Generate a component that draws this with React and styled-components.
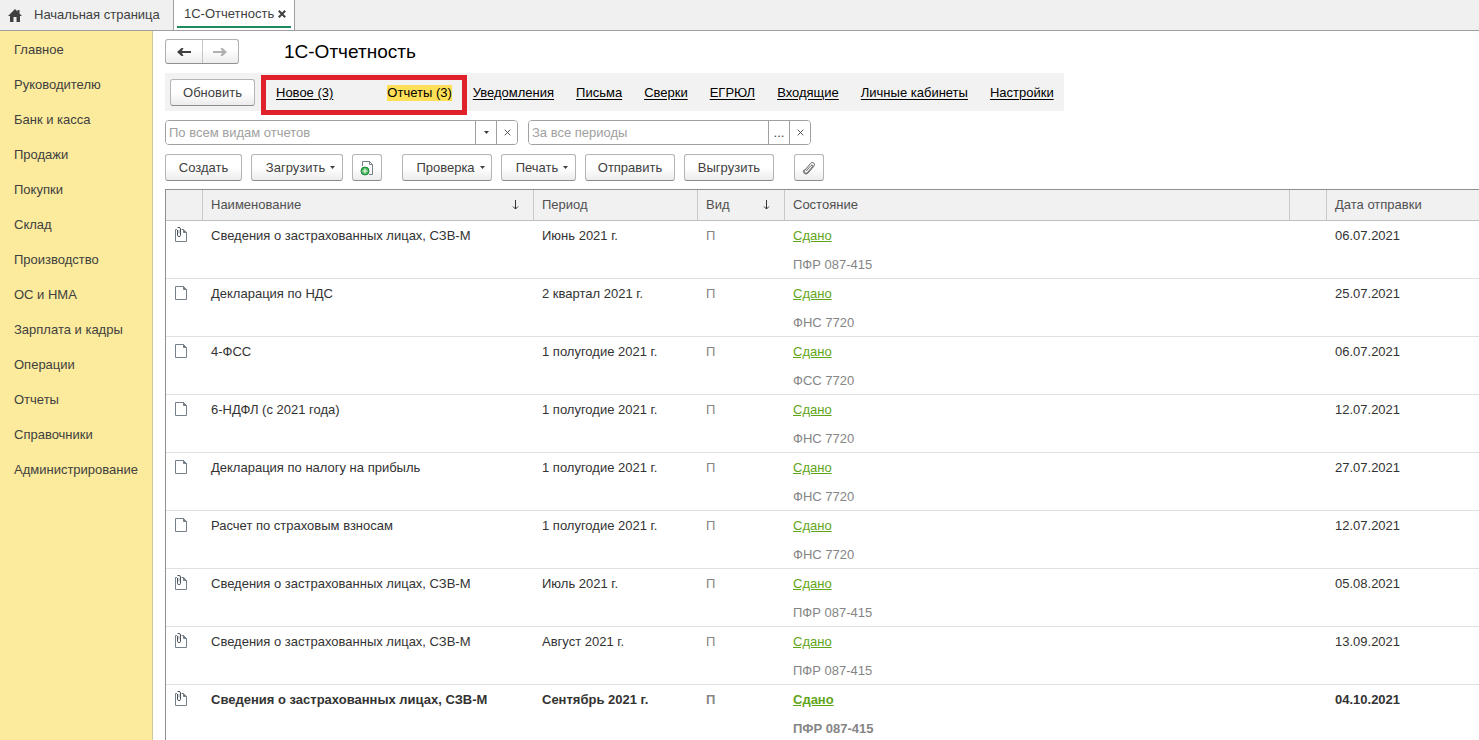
import React, { useState } from 'react';
import styled, { createGlobalStyle, css } from 'styled-components';

const GlobalStyle = createGlobalStyle`
  * {
    box-sizing: border-box;
  }

  body {
    margin: 0;
    background: #fff;
    color: #333;
  }

  body, button, input {
    font-family: "Liberation Sans", Arial, sans-serif;
    font-size: 13px;
    line-height: 16px;
  }
`;

const Page = styled.div`
  display: flex;
  flex-direction: column;
  height: 100vh;
  overflow: hidden;
`;

const TabBar = styled.header`
  display: flex;
  flex: none;
  height: 31px;
  background: #f0f0f0;
  border-bottom: 1px solid #a0a0a0;
`;

const HomeTab = styled.button`
  display: flex;
  align-items: center;
  gap: 12px;
  width: 173px;
  padding: 0 8px;
  border: 0;
  background: none;
  color: #404040;
  white-space: nowrap;
`;

const ActiveTab = styled.div`
  display: flex;
  padding: 0 3px 2px;
  background: #fff;
  border-left: 1px solid #a0a0a0;
  border-right: 1px solid #a0a0a0;
`;

const ActiveTabInner = styled.div`
  display: flex;
  align-items: center;
  justify-content: space-between;
  width: 114px;
  padding: 2px 5px 0 7px;
  border-bottom: 2px solid #1f8a5b;
  color: #404040;
  white-space: nowrap;
`;

const TabClose = styled.button`
  display: flex;
  padding: 0;
  border: 0;
  background: none;
  color: #404040;
`;

const Body = styled.div`
  display: flex;
  flex: 1;
  min-height: 0;
`;

const Sidebar = styled.nav`
  flex: none;
  width: 153px;
  padding-top: 1px;
  background: #fceb9c;
  border-right: 1px solid #cfc69a;
`;

const SidebarLink = styled.a`
  display: flex;
  align-items: center;
  height: 35px;
  padding-left: 14px;
  color: #404040;
  text-decoration: none;
  white-space: nowrap;
`;

const Main = styled.main`
  flex: 1;
  min-width: 0;
  padding: 8px 0 0 12px;
  overflow: hidden;
`;

const TitleRow = styled.div`
  display: flex;
  align-items: center;
  gap: 45px;
  height: 25px;
`;

const Title = styled.h1`
  margin: 0;
  color: #000;
  font-size: 19px;
  font-weight: 400;
  line-height: 24px;
`;

const History = styled.div`
  display: flex;
  width: 74px;
  height: 25px;
  border: 1px solid #b0b0b0;
  border-bottom-color: #909090;
  border-radius: 3px;
  background: linear-gradient(#fff 40%, #ececec);
`;

const HistoryButton = styled.button`
  display: flex;
  flex: 1;
  align-items: center;
  justify-content: center;
  padding: 0;
  border: 0;
  background: none;
  color: ${(props) => (props.disabled ? '#b0b0b0' : '#404040')};

  & + & {
    border-left: 1px solid #c4c4c4;
  }
`;

const Panel = styled.nav`
  display: flex;
  align-items: center;
  gap: 21px;
  width: fit-content;
  height: 38px;
  margin-top: 9px;
  padding: 1px 10px 0 5px;
  background: #f2f2f2;
`;

const PanelLinks = styled.div`
  display: flex;
  gap: 22px;
`;

const MarkedLinks = styled.div`
  position: relative;
  display: flex;
  gap: 54px;
`;

const Marker = styled.div`
  position: absolute;
  inset: -10px -15px -14px;
  border: 5px solid #e0202a;
  pointer-events: none;
`;

const PanelLink = styled.a`
  color: #000;
  text-underline-offset: 2px;
  white-space: nowrap;

  ${(props) => props.$active && css`
    background: #ffdf57;
    text-decoration: none;
  `}
`;

const Button = styled.button`
  display: flex;
  align-items: center;
  justify-content: center;
  gap: 5px;
  width: ${(props) => props.$width}px;
  height: 27px;
  padding: ${(props) => (props.$menu ? '0 0 0 7px' : '0')};
  border: 1px solid #b4b4b4;
  border-bottom-color: #8c8c8c;
  border-radius: 3px;
  background: linear-gradient(#fff 50%, #ececec);
  color: #404040;
  white-space: nowrap;

  svg {
    flex: none;
  }
`;

const Filters = styled.div`
  display: flex;
  gap: 10px;
  margin-top: 9px;
`;

const Field = styled.div`
  display: flex;
  width: ${(props) => props.$width}px;
  height: 25px;
  border: 1px solid #a0a0a0;
  border-radius: 4px;
  overflow: hidden;
`;

const FieldInput = styled.input`
  flex: 1;
  min-width: 0;
  padding: 0 3px;
  border: 0;
  outline: 0;
  color: #404040;

  &::placeholder {
    color: #a0a0a0;
    opacity: 1;
  }
`;

const FieldButton = styled.button`
  display: flex;
  align-items: center;
  justify-content: center;
  width: 21px;
  padding: 0;
  border: 0;
  border-left: 1px solid #a0a0a0;
  background: #fff;
  color: #404040;
`;

const Toolbar = styled.div`
  display: flex;
  gap: 20px;
  margin-top: 9px;
`;

const ButtonGroup = styled.div`
  display: flex;
  gap: 9px;
`;

const Table = styled.table`
  width: 100%;
  margin-top: 8px;
  border-collapse: separate;
  border-spacing: 0;
  border-top: 1px solid #909090;
  border-left: 1px solid #909090;
  table-layout: fixed;
`;

const Col = styled.col`
  width: ${(props) => (props.$width ? `${props.$width}px` : 'auto')};
`;

const HeadCell = styled.th`
  height: 31px;
  padding: 0 8px;
  background: #f1f1f1;
  border-bottom: 1px solid #c0c0c0;
  color: #505050;
  font-weight: 400;
  text-align: left;

  & + & {
    border-left: 1px solid #c8c8c8;
  }
`;

const HeadLabel = styled.div`
  display: flex;
  align-items: center;
  justify-content: space-between;
  padding-right: 6px;
`;

const Row = styled.tr`
  font-weight: ${(props) => (props.$bold ? 700 : 400)};
`;

const Cell = styled.td`
  height: 58px;
  padding: 0 9px;
  border-bottom: 1px solid #e0e0e0;
  color: ${(props) => (props.$muted ? '#858585' : '#333')};
  line-height: 29px;
  vertical-align: top;
  white-space: nowrap;
`;

const FileCell = styled(Cell)`
  padding: 6px 8px;
  line-height: 0;
`;

const StatusLink = styled.a`
  color: #5fa51a;
`;

const Agency = styled.div`
  padding-top: 2px;
  color: #858585;
  line-height: 26px;
`;

const sections = [
  'Главное', 'Руководителю', 'Банк и касса', 'Продажи', 'Покупки', 'Склад', 'Производство',
  'ОС и НМА', 'Зарплата и кадры', 'Операции', 'Отчеты', 'Справочники', 'Администрирование',
];

const links = ['Уведомления', 'Письма', 'Сверки', 'ЕГРЮЛ', 'Входящие', 'Личные кабинеты', 'Настройки'];

const szv = 'Сведения о застрахованных лицах, СЗВ-М';

const reports = [
  { name: szv, period: 'Июнь 2021 г.', agency: 'ПФР 087-415', sent: '06.07.2021', clip: true },
  { name: 'Декларация по НДС', period: '2 квартал 2021 г.', agency: 'ФНС 7720', sent: '25.07.2021' },
  { name: '4-ФСС', period: '1 полугодие 2021 г.', agency: 'ФСС 7720', sent: '06.07.2021' },
  { name: '6-НДФЛ (с 2021 года)', period: '1 полугодие 2021 г.', agency: 'ФНС 7720', sent: '12.07.2021' },
  { name: 'Декларация по налогу на прибыль', period: '1 полугодие 2021 г.', agency: 'ФНС 7720', sent: '27.07.2021' },
  { name: 'Расчет по страховым взносам', period: '1 полугодие 2021 г.', agency: 'ФНС 7720', sent: '12.07.2021' },
  { name: szv, period: 'Июль 2021 г.', agency: 'ПФР 087-415', sent: '05.08.2021', clip: true },
  { name: szv, period: 'Август 2021 г.', agency: 'ПФР 087-415', sent: '13.09.2021', clip: true },
  { name: szv, period: 'Сентябрь 2021 г.', agency: 'ПФР 087-415', sent: '04.10.2021', clip: true, bold: true },
];

const HomeIcon = () => (
  <svg width="14" height="13" viewBox="0 0 14 13" fill="currentColor">
    <path d="M7 0 0 7h2v6h3.500V8h3v5H12V7h2l-2.500-2.500V1h-2v1.500z" />
  </svg>
);

const CrossIcon = ({ size = 8, weight = 2 }) => (
  <svg width={size} height={size} viewBox="0 0 8 8" stroke="currentColor" strokeWidth={weight}>
    <path d="M.8.8l6.400 6.400M7.200.8L.8 7.200" />
  </svg>
);

const ArrowIcon = ({ right }) => (
  <svg width="14" height="10" viewBox="0 0 14 10" fill="currentColor">
    {right ? (
      <path d="M0 4v2h9L7.500 9h2L14 5 9.500 1h-2L9 4z" />
    ) : (
      <path d="M14 4v2H5l1.500 3h-2L0 5l4.500-4h2L5 4z" />
    )}
  </svg>
);

const Caret = () => (
  <svg width="5" height="3" viewBox="0 0 5 3" fill="currentColor">
    <path d="M0 0h5L2.500 3z" />
  </svg>
);

const SortIcon = () => (
  <svg width="7" height="10" viewBox="0 0 7 10" fill="none" stroke="#333">
    <path d="M3.500 0v9M1 6.500l2.500 2.500L6 6.500" />
  </svg>
);

const FileIcon = ({ clip }) => (
  <svg width="14" height="16" viewBox="0 0 14 16" fill="none" stroke="#75808a">
    {clip ? (
      <>
        <path d="M3 2.500H1.500v12h11V5.500L9.500 2.500H7.500" />
        <path d="M9.500 2.500v3h3z" fill="#75808a" />
        <path d="M3.500 3v5.500q0 1 1.500 1t1.500-1V2q0-1.500-1.500-1.500H3.500" stroke="#4a5258" />
        <path d="M5 3v3.500" stroke="#9aa2a8" />
      </>
    ) : (
      <>
        <path d="M1.500 1.500h8l3 3v10h-11z" />
        <path d="M9.500 1.500v3h3z" fill="#75808a" />
      </>
    )}
  </svg>
);

const AddFileIcon = () => (
  <svg width="14" height="16" viewBox="0 0 14 16" fill="none">
    <path d="M2.500 6V1.500h7l3 3v10H9" stroke="#75808a" />
    <path d="M9.500 1.500v3h3" stroke="#75808a" />
    <circle cx="5" cy="11" r="4" fill="#4db558" stroke="#16883a" />
    <path d="M5 8.500v5M2.500 11h5" stroke="#fff" />
  </svg>
);

const ClipIcon = () => (
  <svg width="14" height="14" viewBox="0 0 14 14" fill="none" stroke="#606060" strokeLinecap="round">
    <path d="M4.500 9.500l4.500-5c1.200-1.200 2.500 0 1.400 1.300l-5 5.700c-1.700 1.800-4.300-.3-2.600-2.300L8.500 2.500c2.300-2.500 5.300.2 3.300 2.700L6 12c-2.500 2.500-6-.5-4-3.200" />
  </svg>
);

function App() {
  const [kind, setKind] = useState('');
  const [period, setPeriod] = useState('');

  return (
    <Page>
      <GlobalStyle />
      <TabBar>
        <HomeTab type="button"><HomeIcon />Начальная страница</HomeTab>
        <ActiveTab>
          <ActiveTabInner>
            1С-Отчетность
            <TabClose type="button" aria-label="Закрыть"><CrossIcon /></TabClose>
          </ActiveTabInner>
        </ActiveTab>
      </TabBar>
      <Body>
        <Sidebar>
          {sections.map((section) => (
            <SidebarLink key={section} href="#">{section}</SidebarLink>
          ))}
        </Sidebar>
        <Main>
          <TitleRow>
            <History>
              <HistoryButton type="button" aria-label="Назад"><ArrowIcon /></HistoryButton>
              <HistoryButton type="button" aria-label="Вперед" disabled><ArrowIcon right /></HistoryButton>
            </History>
            <Title>1С-Отчетность</Title>
          </TitleRow>
          <Panel>
            <Button type="button" $width={85}>Обновить</Button>
            <MarkedLinks>
              <PanelLink href="#">Новое (3)</PanelLink>
              <PanelLink href="#" $active>Отчеты (3)</PanelLink>
              <Marker />
            </MarkedLinks>
            <PanelLinks>
              {links.map((link) => (
                <PanelLink key={link} href="#">{link}</PanelLink>
              ))}
            </PanelLinks>
          </Panel>
          <Filters>
            <Field $width={353}>
              <FieldInput
                aria-label="Вид отчета"
                placeholder="По всем видам отчетов"
                value={kind}
                onChange={(e) => setKind(e.target.value)}
              />
              <FieldButton type="button" aria-label="Выбрать вид"><Caret /></FieldButton>
              <FieldButton type="button" aria-label="Очистить вид" onClick={() => setKind('')}>
                <CrossIcon size={7} weight={1} />
              </FieldButton>
            </Field>
            <Field $width={283}>
              <FieldInput
                aria-label="Период"
                placeholder="За все периоды"
                value={period}
                onChange={(e) => setPeriod(e.target.value)}
              />
              <FieldButton type="button" aria-label="Выбрать период">...</FieldButton>
              <FieldButton type="button" aria-label="Очистить период" onClick={() => setPeriod('')}>
                <CrossIcon size={7} weight={1} />
              </FieldButton>
            </Field>
          </Filters>
          <Toolbar>
            <ButtonGroup>
              <Button type="button" $width={77}>Создать</Button>
              <Button type="button" $width={92} $menu>Загрузить <Caret /></Button>
              <Button type="button" $width={30} aria-label="Добавить файл"><AddFileIcon /></Button>
            </ButtonGroup>
            <ButtonGroup>
              <Button type="button" $width={90} $menu>Проверка <Caret /></Button>
              <Button type="button" $width={75} $menu>Печать <Caret /></Button>
              <Button type="button" $width={90}>Отправить</Button>
              <Button type="button" $width={90}>Выгрузить</Button>
            </ButtonGroup>
            <Button type="button" $width={30} aria-label="Файлы"><ClipIcon /></Button>
          </Toolbar>
          <Table>
            <colgroup>
              <Col $width={36} />
              <Col $width={331} />
              <Col $width={164} />
              <Col $width={87} />
              <Col />
              <Col $width={37} />
              <Col $width={153} />
            </colgroup>
            <thead>
              <tr>
                <HeadCell />
                <HeadCell><HeadLabel>Наименование <SortIcon /></HeadLabel></HeadCell>
                <HeadCell>Период</HeadCell>
                <HeadCell><HeadLabel>Вид <SortIcon /></HeadLabel></HeadCell>
                <HeadCell>Состояние</HeadCell>
                <HeadCell />
                <HeadCell>Дата отправки</HeadCell>
              </tr>
            </thead>
            <tbody>
              {reports.map((report, index) => (
                <Row key={index} $bold={report.bold}>
                  <FileCell><FileIcon clip={report.clip} /></FileCell>
                  <Cell>{report.name}</Cell>
                  <Cell>{report.period}</Cell>
                  <Cell $muted>П</Cell>
                  <Cell>
                    <StatusLink href="#">Сдано</StatusLink>
                    <Agency>{report.agency}</Agency>
                  </Cell>
                  <Cell />
                  <Cell>{report.sent}</Cell>
                </Row>
              ))}
            </tbody>
          </Table>
        </Main>
      </Body>
    </Page>
  );
}

export default App;
